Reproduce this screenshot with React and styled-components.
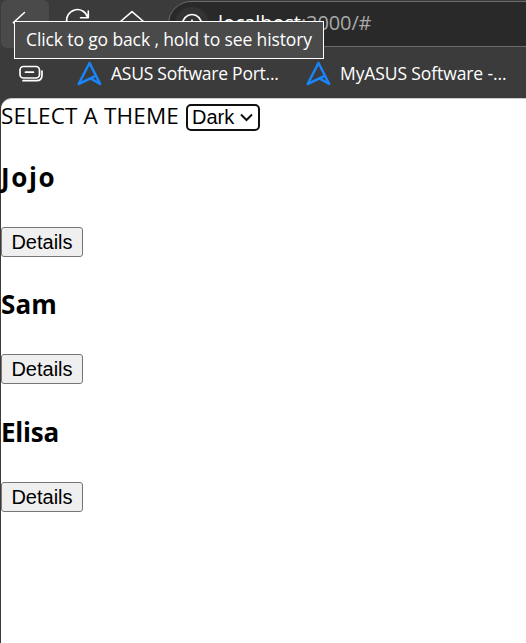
import React from "react";
import styled, { createGlobalStyle } from "styled-components";

const GlobalStyle = createGlobalStyle`
  * { box-sizing: border-box; }
  body { margin: 0; background: #3b3b3b; overflow: hidden; }
`;

const Browser = styled.div`
  position: relative;
  display: flex;
  flex-direction: column;
  width: 526px;
  height: 643px;
  overflow: hidden;
  background: #3b3b3b;
  font-family: "Open Sans", "Noto Sans", sans-serif;
`;

const Toolbar = styled.div`
  display: flex;
  flex: none;
  height: 49px;
  padding-left: 1px;
`;

const NavButton = styled.div`
  flex: none;
  width: ${(p) => p.$width}px;
  height: 48px;
  border-radius: 6px;
  background: ${(p) => (p.$active ? "#4a4a4a" : "transparent")};
  svg { display: block; }
`;

const AddressBar = styled.div`
  display: flex;
  flex: none;
  width: 400px;
  height: 46px;
  margin-top: 1px;
  border: 1px solid #6b6b6b;
  border-radius: 23px;
  background: #292929;
`;

const SiteInfo = styled.div`
  width: 34px;
  height: 34px;
  margin: 5px 0 0 6px;
  border-radius: 50%;
  background: #333;
  svg { display: block; }
`;

const Url = styled.div`
  margin: 6px 0 0 9px;
  color: #a8a8a8;
  font-size: 20px;
  line-height: 30px;
  letter-spacing: -0.1px;
  white-space: nowrap;
  span { color: #fff; }
`;

const Bookmarks = styled.div`
  display: flex;
  flex: none;
  align-items: center;
  height: 49px;
  color: #fff;
`;

const CollectionsIcon = styled.svg`
  flex: none;
  margin-left: 18px;
`;

const Divider = styled.div`
  width: 1px;
  height: 24px;
  margin: 0 17px 0 15px;
  background: #595959;
`;

const Bookmark = styled.div`
  display: flex;
  flex: none;
  align-items: center;
  width: 229px;
  height: 26px;
  white-space: nowrap;
  font-size: 17.5px;
  line-height: 24px;
  letter-spacing: ${(p) => p.$spacing}px;
  svg { flex: none; margin-right: 9px; }
  span { padding-bottom: 2px; }
`;

const Tooltip = styled.div`
  position: absolute;
  left: 14px;
  top: 21px;
  width: 310px;
  height: 38px;
  padding-left: 11px;
  border: 1px solid #fff;
  background: #4a4a4a;
  color: #fff;
  font-size: 17.5px;
  line-height: 35px;
  letter-spacing: -0.12px;
  white-space: nowrap;
`;

const Page = styled.main`
  flex: 1;
  margin-left: 1px;
  border-top: 1px solid #c9c9c9;
  border-radius: 11px 0 0 0;
  background: #fff;
  color: #000;
`;

const ThemeRow = styled.div`
  display: flex;
  height: 33.8px;
  padding-top: 5px;
`;

const ThemeLabel = styled.label`
  width: 185px;
  margin-top: -1px;
  font-size: 22.5px;
  line-height: 25px;
  letter-spacing: 0.16px;
  white-space: nowrap;
`;

const ThemeSelect = styled.div`
  display: flex;
  align-items: center;
  width: 74px;
  height: 27px;
  padding: 0 0 2px 4px;
  border: 2px solid #101010;
  border-radius: 5px;
  font: 20px/22px "Liberation Sans", sans-serif;
  svg { margin: 2px 0 0 6px; }
`;

const Person = styled.section`
  height: 127.5px;
`;

const Name = styled.h3`
  margin: 0;
  padding-top: 27px;
  height: 94px;
  font-size: 26px;
  line-height: 34px;
  letter-spacing: ${(p) => p.$spacing}px;
`;

const DetailsButton = styled.button`
  display: block;
  width: 82px;
  height: 30px;
  padding: 0;
  border: 1px solid #767676;
  border-radius: 3px;
  background: #efefef;
  color: #000;
  font: 20px/26px "Liberation Sans", sans-serif;
`;

const AsusMark = () => (
  <svg width="25" height="25" viewBox="0 0 25 25" fill="none" stroke="#1985f8" strokeWidth="2.5" strokeLinejoin="round">
    <path d="M12.5 2 L23.2 23 L13.5 17.3 M12.5 2 L1.7 23 L19.2 14.7" strokeLinecap="round" />
  </svg>
);

const people = [
  { name: "Jojo", spacing: 1.6 },
  { name: "Sam", spacing: 0.1 },
  { name: "Elisa", spacing: -0.2 },
];

export default function App() {
  return (
    <>
      <GlobalStyle />
      <Browser>
        <Toolbar>
          <NavButton $width={48} $active>
            <svg width="48" height="48" fill="none" stroke="#fff" strokeWidth="1.6" strokeLinecap="round">
              <path d="M23.5 12.5 L12.5 22.5 L23.5 33" />
            </svg>
          </NavButton>
          <NavButton $width={56}>
            <svg width="56" height="48" fill="none" stroke="#fff" strokeWidth="1.6" strokeLinecap="round" strokeLinejoin="round">
              <path d="M18 23 A10.5 10.5 0 0 1 38.7 17.5 M39.3 11 V17.8 H31.5" />
            </svg>
          </NavButton>
          <NavButton $width={63}>
            <svg width="63" height="48" fill="none" stroke="#fff" strokeWidth="1.6" strokeLinejoin="round">
              <path d="M15.5 21.5 L27 11.7 L38.5 21.5 V34 H15.5 Z" />
            </svg>
          </NavButton>
          <AddressBar>
            <SiteInfo>
              <svg width="34" height="34" fill="none" stroke="#fff" strokeWidth="1.7">
                <circle cx="17" cy="17" r="9.5" />
                <path d="M17 12.5 V14.5 M17 16 V22" />
              </svg>
            </SiteInfo>
            <Url><span>localhost</span>:3000/#</Url>
          </AddressBar>
        </Toolbar>
        <Bookmarks>
          <CollectionsIcon width="27" height="20" fill="none" stroke="#fff" strokeWidth="1.7" strokeLinecap="round">
            <rect x="2" y="2.5" width="19.5" height="11.5" rx="3.5" />
            <path d="M7.5 8.2 H15.5 M5 16.7 H18.5 Q24 16.7 24 11 V7" />
          </CollectionsIcon>
          <Divider />
          <Bookmark $spacing={-0.25}><AsusMark /><span>ASUS Software Port...</span></Bookmark>
          <Bookmark $spacing={-0.1}><AsusMark /><span>MyASUS Software -...</span></Bookmark>
        </Bookmarks>
        <Page>
          <ThemeRow>
            <ThemeLabel>SELECT A THEME</ThemeLabel>
            <ThemeSelect role="combobox" aria-label="Theme">
              Dark
              <svg width="13" height="9" fill="none" stroke="#111" strokeWidth="2">
                <path d="M1 1.5 L6.5 7 L12 1.5" />
              </svg>
            </ThemeSelect>
          </ThemeRow>
          {people.map((person) => (
            <Person key={person.name}>
              <Name $spacing={person.spacing}>{person.name}</Name>
              <DetailsButton>Details</DetailsButton>
            </Person>
          ))}
        </Page>
        <Tooltip role="tooltip">Click to go back , hold to see history</Tooltip>
      </Browser>
    </>
  );
}
